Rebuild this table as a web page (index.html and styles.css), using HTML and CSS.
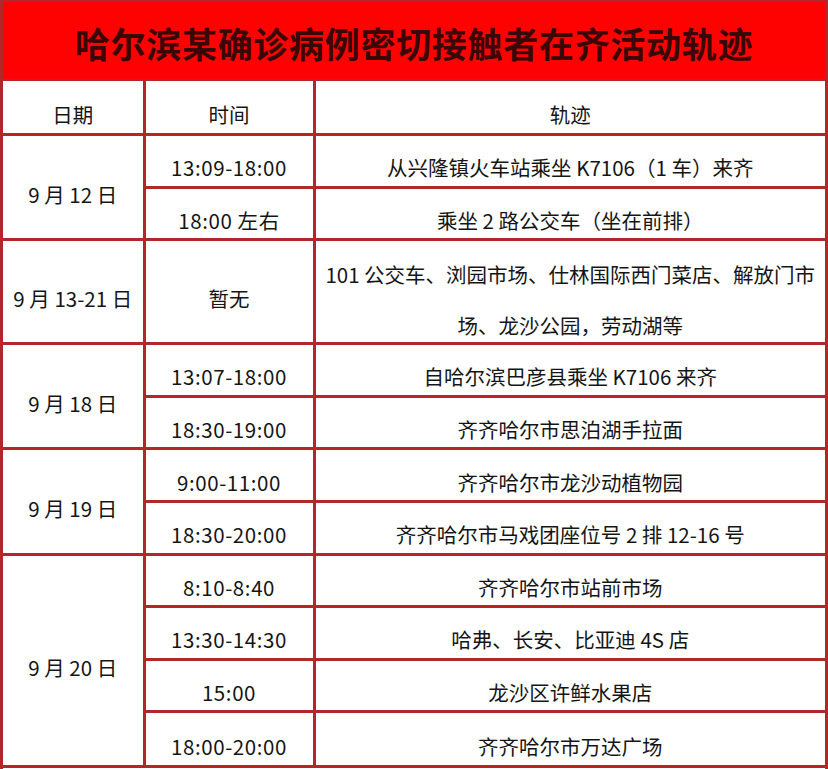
FILE: index.html
```html
<!DOCTYPE html>
<html lang="zh">
<head>
<meta charset="utf-8">
<link rel="stylesheet" href="styles.css">
</head>
<body>
<div class="sheet">
  <div class="title">哈尔滨某确诊病例密切接触者在齐活动轨迹</div>
  <table class="grid">
    <colgroup><col class="c-date"><col class="c-time"><col class="c-track"></colgroup>
    <tr class="head"><td>日期</td><td>时间</td><td>轨迹</td></tr>
    <tr><td rowspan="2">9 月 12 日</td><td class="t">13:09-18:00</td><td>从兴隆镇火车站乘坐 K7106（1 车）来齐</td></tr>
    <tr><td class="t">18:00 左右</td><td>乘坐 2 路公交车（坐在前排）</td></tr>
    <tr class="double"><td>9 月 13-21 日</td><td>暂无</td><td class="multi"><div class="lines">101 公交车、浏园市场、仕林国际西门菜店、解放门市<br>场、龙沙公园，劳动湖等</div></td></tr>
    <tr><td rowspan="2">9 月 18 日</td><td class="t">13:07-18:00</td><td>自哈尔滨巴彦县乘坐 K7106 来齐</td></tr>
    <tr><td class="t">18:30-19:00</td><td>齐齐哈尔市思泊湖手拉面</td></tr>
    <tr><td rowspan="2">9 月 19 日</td><td class="t">9:00-11:00</td><td>齐齐哈尔市龙沙动植物园</td></tr>
    <tr><td class="t">18:30-20:00</td><td>齐齐哈尔市马戏团座位号 2 排 12-16 号</td></tr>
    <tr><td rowspan="4">9 月 20 日</td><td class="t">8:10-8:40</td><td>齐齐哈尔市站前市场</td></tr>
    <tr><td class="t">13:30-14:30</td><td>哈弗、长安、比亚迪 4S 店</td></tr>
    <tr><td class="t">15:00</td><td>龙沙区许鲜水果店</td></tr>
    <tr class="last"><td class="t">18:00-20:00</td><td>齐齐哈尔市万达广场</td></tr>
  </table>
</div>
</body>
</html>
```
FILE: styles.css
```css
html, body {
  margin: 0;
  padding: 0;
  background: #ffffff;
}
.sheet {
  width: 828px;
  height: 769px;
  box-sizing: border-box;
  border-left: 3px solid #b3262a;
  border-right: 3px solid #b3262a;
  border-top: 2px solid #b3262a;
  background: #ffffff;
  overflow: hidden;
  font-family: "Noto Sans CJK SC", "Noto Sans", sans-serif;
  color: #151515;
}
.title {
  height: 79px;
  background: #fe0101;
  color: #3a0606;
  font-size: 35px;
  font-weight: 700;
  letter-spacing: 0.7px;
  display: flex;
  align-items: center;
  justify-content: center;
  padding-top: 4px;
  box-sizing: border-box;
  border-bottom: 2px solid #b3262a;
}
.grid {
  width: 100%;
  border-collapse: collapse;
  table-layout: fixed;
  font-size: 20.5px;
}
.c-date { width: 141px; }
.c-time { width: 170px; }
.grid td {
  border: 3px solid #b3262a;
  text-align: center;
  vertical-align: middle;
  padding: 13px 2px 0 2px;
  height: 36.6px;
  line-height: 24px;
  white-space: nowrap;
}
.grid tr:first-child td { border-top: none; }
.grid td:first-child { border-left: none; }
.grid td:last-child { border-right: none; }
.grid td.t {
  letter-spacing: 0.6px;
}
.grid tr.head td {
  height: 39px;
}
.grid tr.double td {
  height: 88px;
}
.grid tr.last td {
  height: 38.6px;
}
.grid td.multi {
  padding: 0 2px;
  vertical-align: top;
}
.lines {
  height: 92px;
  padding-top: 8px;
  line-height: 51px;
}
```
